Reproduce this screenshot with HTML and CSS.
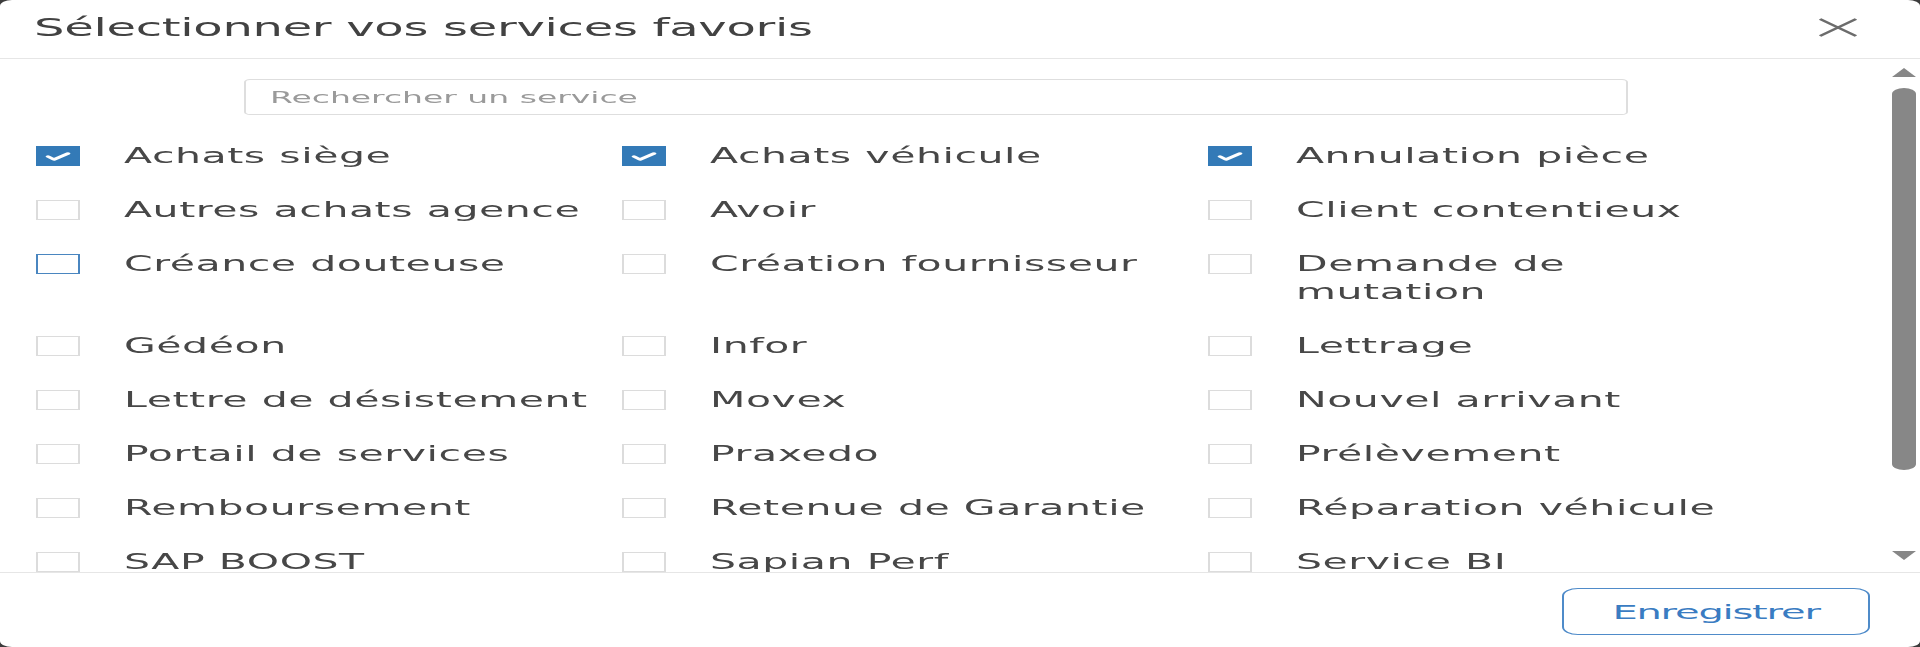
FILE: index.html
```html
<!DOCTYPE html>
<html lang="fr">
<head>
<meta charset="utf-8">
<title>Services favoris</title>
<link rel="stylesheet" href="styles.css">
</head>
<body>
<div class="dialog">
  <header class="dlg-head">
    <h1 class="dlg-title">Sélectionner vos services favoris</h1>
    <button class="close" aria-label="Fermer"><svg viewBox="0 0 20 19" width="20" height="19"><path d="M1 1 L19 18 M19 1 L1 18" stroke="#6c6c6c" stroke-width="1.8" fill="none"/></svg></button>
  </header>
  <div class="dlg-body">
    <div class="content">
      <input class="search" type="text" placeholder="Rechercher un service">
      <ul class="services">
        <li class="item"><span class="cb checked"><svg viewBox="0 0 20 18" width="20" height="18"><path d="M5 9.5 L8 12.5 L15 6.5" stroke="#fff" stroke-width="2.4" fill="none" stroke-linecap="round" stroke-linejoin="round"/></svg></span><span class="lbl">Achats siège</span></li>
        <li class="item"><span class="cb checked"><svg viewBox="0 0 20 18" width="20" height="18"><path d="M5 9.5 L8 12.5 L15 6.5" stroke="#fff" stroke-width="2.4" fill="none" stroke-linecap="round" stroke-linejoin="round"/></svg></span><span class="lbl">Achats véhicule</span></li>
        <li class="item"><span class="cb checked"><svg viewBox="0 0 20 18" width="20" height="18"><path d="M5 9.5 L8 12.5 L15 6.5" stroke="#fff" stroke-width="2.4" fill="none" stroke-linecap="round" stroke-linejoin="round"/></svg></span><span class="lbl">Annulation pièce</span></li>
        <li class="item"><span class="cb"></span><span class="lbl">Autres achats agence</span></li>
        <li class="item"><span class="cb"></span><span class="lbl">Avoir</span></li>
        <li class="item"><span class="cb"></span><span class="lbl">Client contentieux</span></li>
        <li class="item"><span class="cb focus"></span><span class="lbl">Créance douteuse</span></li>
        <li class="item"><span class="cb"></span><span class="lbl">Création fournisseur</span></li>
        <li class="item"><span class="cb"></span><span class="lbl">Demande de mutation</span></li>
        <li class="item"><span class="cb"></span><span class="lbl">Gédéon</span></li>
        <li class="item"><span class="cb"></span><span class="lbl">Infor</span></li>
        <li class="item"><span class="cb"></span><span class="lbl">Lettrage</span></li>
        <li class="item"><span class="cb"></span><span class="lbl">Lettre de désistement</span></li>
        <li class="item"><span class="cb"></span><span class="lbl">Movex</span></li>
        <li class="item"><span class="cb"></span><span class="lbl">Nouvel arrivant</span></li>
        <li class="item"><span class="cb"></span><span class="lbl">Portail de services</span></li>
        <li class="item"><span class="cb"></span><span class="lbl">Praxedo</span></li>
        <li class="item"><span class="cb"></span><span class="lbl">Prélèvement</span></li>
        <li class="item"><span class="cb"></span><span class="lbl">Remboursement</span></li>
        <li class="item"><span class="cb"></span><span class="lbl">Retenue de Garantie</span></li>
        <li class="item"><span class="cb"></span><span class="lbl">Réparation véhicule</span></li>
        <li class="item"><span class="cb"></span><span class="lbl">SAP BOOST</span></li>
        <li class="item"><span class="cb"></span><span class="lbl">Sapian Perf</span></li>
        <li class="item"><span class="cb"></span><span class="lbl">Service BI</span></li>
      </ul>
    </div>
    <div class="scrollbar"><span class="arrow up"></span><span class="thumb"></span><span class="arrow down"></span></div>
  </div>
  <footer class="dlg-foot"><button class="save">Enregistrer</button></footer>
</div>
</body>
</html>
```
FILE: styles.css
```css
* { box-sizing: border-box; }
html, body { margin: 0; padding: 0; }
body {
  background: #3c3c3c;
  width: 1920px;
  height: 647px;
  overflow: hidden;
  font-family: "DejaVu Sans", sans-serif;
  color: #474747;
}
.dialog {
  width: 960px;
  height: 647px;
  background: #fff;
  border-radius: 6px;
  transform: scaleX(2);
  transform-origin: 0 0;
  display: flex;
  flex-direction: column;
  overflow: hidden;
}
.dlg-head {
  height: 59px;
  flex: none;
  display: flex;
  justify-content: space-between;
  align-items: flex-start;
  padding: 13px 31px 0 17px;
  border-bottom: 1px solid #e6e6e6;
}
.dlg-title {
  margin: 0;
  font-size: 24px;
  line-height: 30px;
  font-weight: normal;
  color: #424242;
  letter-spacing: -0.15px;
}
.close {
  border: 0;
  background: none;
  padding: 0;
  margin-top: 5px;
  width: 20px;
  height: 19px;
  display: block;
}
.close svg { display: block; }
.dlg-body { flex: 1; display: flex; min-height: 0; }
.content { flex: 1; overflow: hidden; padding-top: 20px; }
.search {
  display: block;
  margin-left: 122px;
  width: 692px;
  height: 36px;
  border: 1px solid #dedede;
  border-radius: 3px;
  padding: 0 12px;
  font-family: inherit;
  font-size: 16.5px;
  color: #555;
  background: #fff;
  outline: none;
}
.search::placeholder { color: #9a9a9a; }
.services {
  list-style: none;
  margin: 27px 0 0;
  padding: 0 0 0 18px;
  display: grid;
  grid-template-columns: repeat(3, 293px);
  row-gap: 26px;
}
.item { display: flex; align-items: flex-start; }
.cb {
  flex: none;
  width: 22px;
  height: 20px;
  margin-top: 4px;
  margin-right: 22px;
  border: 1px solid #dcdcdc;
  background: #fff;
  display: flex;
}
.cb.checked { background: #337ab7; border-color: #337ab7; }
.cb.focus { border-color: #4a86c0; }
.cb svg { display: block; }
.lbl {
  font-size: 20.5px;
  line-height: 28px;
  letter-spacing: 0.28px;
  max-width: 234px;
}
.scrollbar {
  flex: none;
  width: 16px;
  display: flex;
  flex-direction: column;
  align-items: center;
  padding: 9px 0 12px;
}
.arrow {
  width: 0;
  height: 0;
  border-left: 6px solid transparent;
  border-right: 6px solid transparent;
}
.arrow.up { border-bottom: 9px solid #878787; }
.thumb {
  width: 12px;
  height: 382px;
  margin-top: 11px;
  border-radius: 6px;
  background: #878787;
}
.arrow.down { margin-top: auto; border-top: 9px solid #878787; }
.dlg-foot {
  flex: none;
  height: 75px;
  border-top: 1px solid #e6e6e6;
  display: flex;
  justify-content: flex-end;
  align-items: flex-start;
  padding: 15px 25px 0 0;
}
.save {
  width: 154px;
  height: 47px;
  border: 1px solid #4f8bc9;
  border-radius: 8px;
  background: #fff;
  color: #3a7cc2;
  font-family: inherit;
  font-size: 20px;
  letter-spacing: -0.6px;
}
```
